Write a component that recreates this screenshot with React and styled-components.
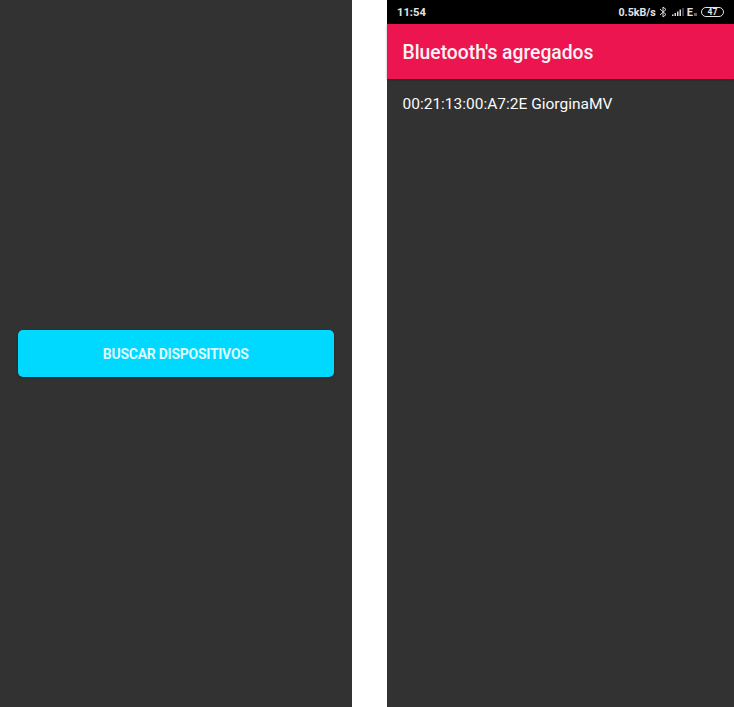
import React from 'react'
import styled, {createGlobalStyle} from 'styled-components'

const Global = createGlobalStyle`
  html, body {
    margin: 0;
    padding: 0;
    background: #fff;
    font-family: Roboto, "Liberation Sans", sans-serif;
  }
`
const Page = styled.div`
  display: flex;
  justify-content: space-between;
  width: 734px;
  height: 707px;
  overflow: hidden;
`
const Screen = styled.div`
  display: flex;
  flex-direction: column;
  width: ${p => p.$width}px;
  height: 100%;
  background: #323232;
`
const CenterArea = styled.div`
  flex: 1;
  display: flex;
  align-items: center;
  padding: 0 18px 0 17.5px;
  margin-top: -1px;
`
const SearchButton = styled.button`
  width: 100%;
  height: 47px;
  padding: 2px 0 0;
  border: 0;
  border-radius: 5px;
  background: #00d9ff;
  color: #dff8fc;
  font-family: inherit;
  font-size: 14px;
  font-weight: 700;
  letter-spacing: -0.27px;
  box-shadow: 0 1px 2px rgba(0, 0, 0, 0.3);
`
const StatusBar = styled.div`
  display: flex;
  align-items: center;
  justify-content: space-between;
  height: 24px;
  padding: 0 10px 0 10px;
  background: #000;
  color: #e4e4e4;
  font-size: 11px;
  font-weight: 700;
`
const Clock = styled.span`
  font-size: 11.2px;
`
const StatusRight = styled.div`
  display: flex;
  align-items: center;
`
const Speed = styled.span`
  margin-right: 3px;
  font-size: 10.7px;
`
const Battery = styled.span`
  display: flex;
  align-items: center;
  justify-content: center;
  width: 21px;
  height: 8px;
  margin-left: 4px;
  border: 1px solid #e4e4e4;
  border-radius: 5px;
  font-size: 8.5px;
`
const NetLetter = styled.span`
  margin-left: 3px;
  font-size: 11px;
`
const NetArrows = styled.span`
  width: 3px;
  height: 3px;
  margin: 5px 0 0 1px;
  background: #666;
`
const AppBar = styled.div`
  box-sizing: border-box;
  display: flex;
  align-items: center;
  height: 55px;
  padding: 1px 15.5px 0;
  background: #ec1550;
  color: #fbf3f5;
  font-size: 19.3px;
  font-weight: 500;
  box-shadow: 0 1px 2px rgba(0, 0, 0, 0.35);
`
const Row = styled.div`
  padding: 16px 15.5px 0;
  color: #fafafa;
  font-size: 15.5px;
  line-height: 19px;
`

const BluetoothIcon = () => (
  <svg width="8" height="12" viewBox="0 0 8 12" fill="none" stroke="#dcdcdc" strokeWidth="1">
    <path d="M1 3l6 5.5L4 11V1l3 2.5L1 9" />
  </svg>
)

const SignalIcon = () => (
  <svg width="12" height="8" viewBox="0 0 12 8" fill="#dcdcdc" style={{marginLeft: 5}}>
    <rect x="0" y="6.5" width="1.5" height="1.5" />
    <rect x="2.5" y="5" width="1.5" height="3" />
    <rect x="5" y="3.5" width="1.5" height="4.5" />
    <rect x="7.5" y="1.5" width="1.5" height="6.5" />
    <rect x="10.5" y="0" width="1" height="8" opacity="0.6" />
  </svg>
)

export default function App () {
  return (
    <Page>
      <Global />
      <Screen $width={352}>
        <CenterArea>
          <SearchButton>BUSCAR DISPOSITIVOS</SearchButton>
        </CenterArea>
      </Screen>
      <Screen $width={347}>
        <StatusBar>
          <Clock>11:54</Clock>
          <StatusRight>
            <Speed>0.5kB/s</Speed>
            <BluetoothIcon />
            <SignalIcon />
            <NetLetter>E</NetLetter>
            <NetArrows />
            <Battery>47</Battery>
          </StatusRight>
        </StatusBar>
        <AppBar>Bluetooth's agregados</AppBar>
        <Row>00:21:13:00:A7:2E GiorginaMV</Row>
      </Screen>
    </Page>
  )
}
